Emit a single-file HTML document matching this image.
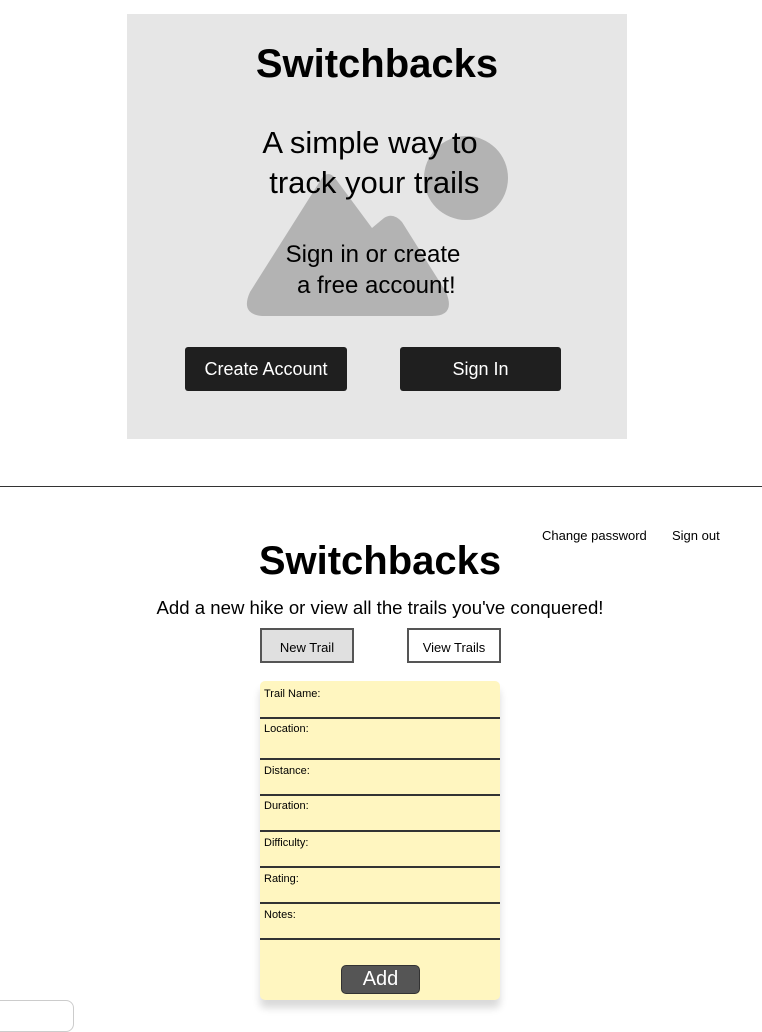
<!DOCTYPE html>
<html><head><style>
body{margin:0;width:762px;height:1014px;position:relative;background:#fff;font-family:"Liberation Sans",Arial,sans-serif;overflow:hidden;color:#000}
.a{position:absolute}
.c{text-align:center}
.lbl{position:absolute;left:4px;font-size:11px}
.ln{position:absolute;left:0;width:240px;height:2px;background:#333}
</style></head><body>
<div class="a" style="left:127px;top:14px;width:500px;height:425px;background:#e6e6e6"></div>
<svg class="a" style="left:0;top:0" width="762" height="450">
<circle cx="466" cy="178" r="42" fill="#b3b3b3"/>
<path d="M262 316 Q240 314 250 292 L322 178 Q328 170 335 178 L372 228 L384 218 Q393 212 402 222 L446 292 Q456 316 432 316 Z" fill="#b3b3b3"/>
</svg>
<div class="a c" style="left:127px;width:500px;top:42px;font-size:40px;font-weight:bold">Switchbacks</div>
<div class="a c" style="left:120px;width:500px;top:123px;font-size:31px;line-height:40px">A simple way to<br>&nbsp;track your trails</div>
<div class="a c" style="left:123px;width:500px;top:239px;font-size:24px;line-height:31px">Sign in or create<br>&nbsp;a free account!</div>
<div class="a c" style="left:185px;top:347px;width:162px;height:44px;line-height:44px;background:#1f1f1f;color:#fff;font-size:18px;border-radius:3px">Create Account</div>
<div class="a c" style="left:400px;top:347px;width:161px;height:44px;line-height:44px;background:#1f1f1f;color:#fff;font-size:18px;border-radius:3px">Sign In</div>
<div class="a" style="left:0;top:486px;width:762px;height:1px;background:#333"></div>
<div class="a" style="left:542px;top:528px;font-size:13px">Change password</div>
<div class="a" style="left:672px;top:528px;font-size:13px">Sign out</div>
<div class="a c" style="left:180px;width:400px;top:539px;font-size:40px;font-weight:bold">Switchbacks</div>
<div class="a c" style="left:80px;width:600px;top:597px;font-size:18.6px">Add a new hike or view all the trails you've conquered!</div>
<div class="a c" style="left:260px;top:628px;width:90px;height:31px;line-height:36px;background:#e0e0e0;border:2px solid #555;font-size:13px">New Trail</div>
<div class="a c" style="left:407px;top:628px;width:90px;height:31px;line-height:36px;background:#fff;border:2px solid #555;font-size:13px">View Trails</div>
<div class="a" style="left:260px;top:681px;width:240px;height:319px;background:#fff6c0;border-radius:5px;box-shadow:0 8px 8px rgba(0,0,0,0.15)">
<div class="lbl" style="top:7px">Trail Name:</div><div class="ln" style="top:36px"></div>
<div class="lbl" style="top:42px">Location:</div><div class="ln" style="top:77px"></div>
<div class="lbl" style="top:84px">Distance:</div><div class="ln" style="top:113px"></div>
<div class="lbl" style="top:119px">Duration:</div><div class="ln" style="top:149px"></div>
<div class="lbl" style="top:156px">Difficulty:</div><div class="ln" style="top:185px"></div>
<div class="lbl" style="top:192px">Rating:</div><div class="ln" style="top:221px"></div>
<div class="lbl" style="top:228px">Notes:</div><div class="ln" style="top:257px"></div>
<div class="a c" style="left:81px;top:284px;width:77px;height:27px;line-height:27px;background:#555;border:1px solid #333;border-radius:5px;color:#fff;font-size:20px">Add</div>
</div>
<div class="a" style="left:-10px;top:1000px;width:82px;height:30px;border:1px solid #ccc;border-radius:8px"></div>
</body></html>
